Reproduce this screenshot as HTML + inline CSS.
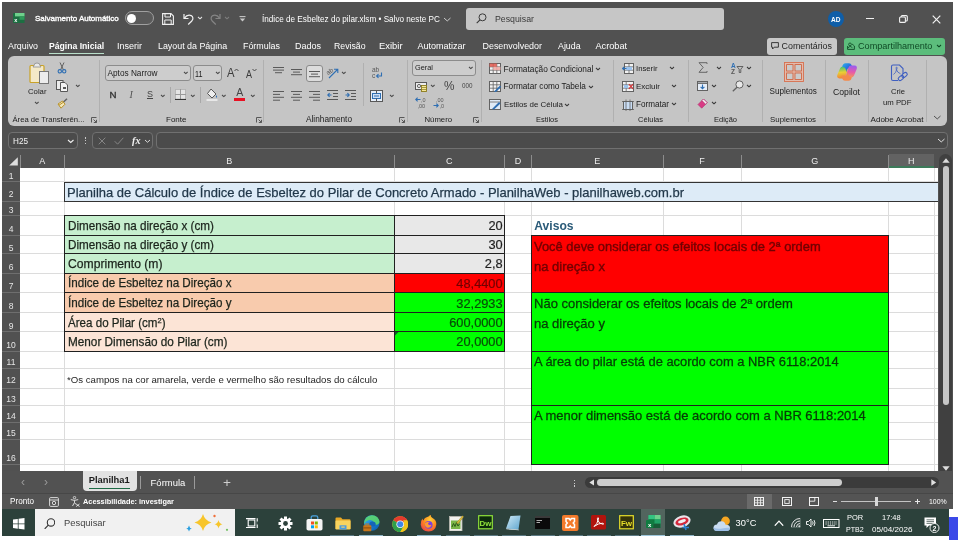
<!DOCTYPE html><html lang="pt-BR"><head><meta charset="utf-8"><title>Índice de Esbeltez do pilar.xlsm - Excel</title><style>

html,body{margin:0;padding:0;background:#fff;}
body{width:958px;height:540px;position:relative;overflow:hidden;font-family:"Liberation Sans", sans-serif;}
#r{will-change:transform;position:absolute;left:0;top:0;width:958px;height:540px;overflow:hidden;}
#r div,#r svg,#r span{position:absolute;}
#r span{white-space:nowrap;transform-origin:0 50%;display:block;}

</style></head><body><div id="r">
<div style="left:2px;top:2px;width:950.5px;height:507px;background:#515151;"></div>
<div style="left:466px;top:8px;width:258px;height:22px;background:#c6c6c6;border-radius:3px;"></div>
<div style="left:7.8px;top:56px;width:939px;height:69.5px;background:#c5c5c5;border-radius:6px;"></div>
<div style="left:7.5px;top:131.5px;width:70.5px;height:17.8px;background:#4b4b4b;border:1px solid #707070;border-radius:4px;box-sizing:border-box;"></div>
<div style="left:92.3px;top:131.5px;width:60.3px;height:17.8px;background:#4b4b4b;border:1px solid #707070;border-radius:4px;box-sizing:border-box;"></div>
<div style="left:155.8px;top:131.5px;width:792.5px;height:17.8px;background:#4b4b4b;border:1px solid #707070;border-radius:4px;box-sizing:border-box;"></div>
<div style="left:2px;top:154px;width:950.5px;height:317px;background:#515151;"></div>
<div style="left:20px;top:167.5px;width:918.3px;height:303.5px;background:#fff;"></div>
<div style="left:64.0px;top:167.5px;width:1px;height:303.5px;background:#dcdcdc;"></div>
<div style="left:393.5px;top:167.5px;width:1px;height:303.5px;background:#dcdcdc;"></div>
<div style="left:504.0px;top:167.5px;width:1px;height:303.5px;background:#dcdcdc;"></div>
<div style="left:531.0px;top:167.5px;width:1px;height:303.5px;background:#dcdcdc;"></div>
<div style="left:662.5px;top:167.5px;width:1px;height:303.5px;background:#dcdcdc;"></div>
<div style="left:740.5px;top:167.5px;width:1px;height:303.5px;background:#dcdcdc;"></div>
<div style="left:888.0px;top:167.5px;width:1px;height:303.5px;background:#dcdcdc;"></div>
<div style="left:933.5px;top:167.5px;width:1px;height:303.5px;background:#dcdcdc;"></div>
<div style="left:20px;top:181.0px;width:918.3px;height:1px;background:#dcdcdc;"></div>
<div style="left:20px;top:201.0px;width:918.3px;height:1px;background:#dcdcdc;"></div>
<div style="left:20px;top:215.0px;width:918.3px;height:1px;background:#dcdcdc;"></div>
<div style="left:20px;top:234.5px;width:918.3px;height:1px;background:#dcdcdc;"></div>
<div style="left:20px;top:253.2px;width:918.3px;height:1px;background:#dcdcdc;"></div>
<div style="left:20px;top:272.7px;width:918.3px;height:1px;background:#dcdcdc;"></div>
<div style="left:20px;top:291.9px;width:918.3px;height:1px;background:#dcdcdc;"></div>
<div style="left:20px;top:311.8px;width:918.3px;height:1px;background:#dcdcdc;"></div>
<div style="left:20px;top:331.1px;width:918.3px;height:1px;background:#dcdcdc;"></div>
<div style="left:20px;top:350.7px;width:918.3px;height:1px;background:#dcdcdc;"></div>
<div style="left:20px;top:368.0px;width:918.3px;height:1px;background:#dcdcdc;"></div>
<div style="left:20px;top:388.0px;width:918.3px;height:1px;background:#dcdcdc;"></div>
<div style="left:20px;top:404.5px;width:918.3px;height:1px;background:#dcdcdc;"></div>
<div style="left:20px;top:422.0px;width:918.3px;height:1px;background:#dcdcdc;"></div>
<div style="left:20px;top:438.5px;width:918.3px;height:1px;background:#dcdcdc;"></div>
<div style="left:20px;top:463.5px;width:918.3px;height:1px;background:#dcdcdc;"></div>
<div style="left:19.5px;top:154.5px;width:1px;height:13px;background:#8c8c8c;"></div>
<div style="left:64.0px;top:154.5px;width:1px;height:13px;background:#8c8c8c;"></div>
<div style="left:393.5px;top:154.5px;width:1px;height:13px;background:#8c8c8c;"></div>
<div style="left:504.0px;top:154.5px;width:1px;height:13px;background:#8c8c8c;"></div>
<div style="left:531.0px;top:154.5px;width:1px;height:13px;background:#8c8c8c;"></div>
<div style="left:662.5px;top:154.5px;width:1px;height:13px;background:#8c8c8c;"></div>
<div style="left:740.5px;top:154.5px;width:1px;height:13px;background:#8c8c8c;"></div>
<div style="left:888.0px;top:154.5px;width:1px;height:13px;background:#8c8c8c;"></div>
<div style="left:2px;top:181.0px;width:18px;height:1px;background:#6e6e6e;"></div>
<div style="left:2px;top:201.0px;width:18px;height:1px;background:#6e6e6e;"></div>
<div style="left:2px;top:215.0px;width:18px;height:1px;background:#6e6e6e;"></div>
<div style="left:2px;top:234.5px;width:18px;height:1px;background:#6e6e6e;"></div>
<div style="left:2px;top:253.2px;width:18px;height:1px;background:#6e6e6e;"></div>
<div style="left:2px;top:272.7px;width:18px;height:1px;background:#6e6e6e;"></div>
<div style="left:2px;top:291.9px;width:18px;height:1px;background:#6e6e6e;"></div>
<div style="left:2px;top:311.8px;width:18px;height:1px;background:#6e6e6e;"></div>
<div style="left:2px;top:331.1px;width:18px;height:1px;background:#6e6e6e;"></div>
<div style="left:2px;top:350.7px;width:18px;height:1px;background:#6e6e6e;"></div>
<div style="left:2px;top:368.0px;width:18px;height:1px;background:#6e6e6e;"></div>
<div style="left:2px;top:388.0px;width:18px;height:1px;background:#6e6e6e;"></div>
<div style="left:2px;top:404.5px;width:18px;height:1px;background:#6e6e6e;"></div>
<div style="left:2px;top:422.0px;width:18px;height:1px;background:#6e6e6e;"></div>
<div style="left:2px;top:438.5px;width:18px;height:1px;background:#6e6e6e;"></div>
<div style="left:2px;top:463.5px;width:18px;height:1px;background:#6e6e6e;"></div>
<div style="left:888.5px;top:154px;width:45.5px;height:13.5px;background:#626262;"></div>
<div style="left:888.5px;top:166px;width:45.5px;height:1.5px;background:#3d7a5a;"></div>
<svg style="left:9px;top:157.3px;" width="9" height="8.6" viewBox="0 0 9 8.6"><path d="M8.8 0.2 L8.8 8.4 L0.2 8.4 Z" fill="#dedede"/></svg>
<div style="left:64px;top:181.5px;width:874.3px;height:20.3px;background:#ddebf7;border-top:1px solid #333;border-bottom:1px solid #333;border-left:1px solid #333;box-sizing:border-box;"></div>
<div style="left:64px;top:215.5px;width:330px;height:19.5px;background:#c6efce;"></div>
<div style="left:394px;top:215.5px;width:110px;height:19.5px;background:#e8e8e8;"></div>
<div style="left:64px;top:235px;width:330px;height:18.69999999999999px;background:#c6efce;"></div>
<div style="left:394px;top:235px;width:110px;height:18.69999999999999px;background:#e8e8e8;"></div>
<div style="left:64px;top:253.7px;width:330px;height:19.5px;background:#c6efce;"></div>
<div style="left:394px;top:253.7px;width:110px;height:19.5px;background:#e8e8e8;"></div>
<div style="left:64px;top:273.2px;width:330px;height:19.19999999999999px;background:#f8cbad;"></div>
<div style="left:394px;top:273.2px;width:110px;height:19.19999999999999px;background:#ff0000;"></div>
<div style="left:64px;top:292.4px;width:330px;height:19.900000000000034px;background:#f8cbad;"></div>
<div style="left:394px;top:292.4px;width:110px;height:19.900000000000034px;background:#00ff00;"></div>
<div style="left:64px;top:312.3px;width:330px;height:19.30000000000001px;background:#fce4d6;"></div>
<div style="left:394px;top:312.3px;width:110px;height:19.30000000000001px;background:#00ff00;"></div>
<div style="left:64px;top:331.6px;width:330px;height:19.599999999999966px;background:#fce4d6;"></div>
<div style="left:394px;top:331.6px;width:110px;height:19.599999999999966px;background:#00ff00;"></div>
<div style="left:64px;top:215.0px;width:440px;height:1px;background:#202020;"></div>
<div style="left:64px;top:234.5px;width:440px;height:1px;background:#202020;"></div>
<div style="left:64px;top:253.2px;width:440px;height:1px;background:#202020;"></div>
<div style="left:64px;top:272.7px;width:440px;height:1px;background:#202020;"></div>
<div style="left:64px;top:291.9px;width:440px;height:1px;background:#202020;"></div>
<div style="left:64px;top:311.8px;width:440px;height:1px;background:#202020;"></div>
<div style="left:64px;top:331.1px;width:440px;height:1px;background:#202020;"></div>
<div style="left:64px;top:350.7px;width:440px;height:1px;background:#202020;"></div>
<div style="left:63.5px;top:215.0px;width:1px;height:136.7px;background:#202020;"></div>
<div style="left:393.5px;top:215.0px;width:1px;height:136.7px;background:#202020;"></div>
<div style="left:503.5px;top:215.0px;width:1px;height:136.7px;background:#202020;"></div>
<div style="left:531px;top:235px;width:357px;height:57px;background:#ff0000;"></div>
<div style="left:531px;top:292px;width:357px;height:172px;background:#00ff00;"></div>
<div style="left:531px;top:234.5px;width:357px;height:1px;background:#202020;"></div>
<div style="left:531px;top:291.5px;width:357px;height:1px;background:#202020;"></div>
<div style="left:531px;top:350.5px;width:357px;height:1px;background:#202020;"></div>
<div style="left:531px;top:404.5px;width:357px;height:1px;background:#202020;"></div>
<div style="left:531px;top:463.5px;width:357px;height:1px;background:#202020;"></div>
<div style="left:530.5px;top:234.5px;width:1px;height:230px;background:#202020;"></div>
<div style="left:887.5px;top:234.5px;width:1px;height:230px;background:#202020;"></div>
<div style="left:939.3px;top:153.5px;width:13px;height:318px;background:#404040;border-radius:6.5px 6.5px 0 0;"></div>
<div style="left:942.8px;top:166px;width:6.3px;height:239px;background:#c6c6c6;border-radius:3px;"></div>
<svg style="left:942px;top:157.5px;" width="8" height="5" viewBox="0 0 8 5"><path d="M4 0.3 L7.7 4.8 L0.3 4.8 Z" fill="#dcdcdc"/></svg>
<svg style="left:942px;top:465.5px;" width="8" height="5" viewBox="0 0 8 5"><path d="M4 4.7 L7.7 0.2 L0.3 0.2 Z" fill="#dcdcdc"/></svg>
<div style="left:2px;top:471.3px;width:950.5px;height:22.5px;background:#525252;"></div>
<div style="left:83px;top:471px;width:54px;height:20px;background:#e2e2e2;border-radius:0 0 4px 4px;"></div>
<div style="left:88.5px;top:487.5px;width:41.5px;height:1.3px;background:#1e6b45;"></div>
<div style="left:193.5px;top:476px;width:1px;height:13px;background:#9a9a9a;"></div>
<div style="left:585px;top:477.3px;width:354px;height:11px;background:#3b3b3b;border-radius:5.5px;"></div>
<div style="left:597px;top:479.2px;width:245px;height:6.8px;background:#cdcdcd;border-radius:3.4px;"></div>
<svg style="left:588.5px;top:479px;" width="5.5" height="7" viewBox="0 0 5.5 7"><path d="M0.3 3.5 L5.2 0.3 L5.2 6.7 Z" fill="#e0e0e0"/></svg>
<svg style="left:931px;top:479px;" width="5.5" height="7" viewBox="0 0 5.5 7"><path d="M5.2 3.5 L0.3 0.3 L0.3 6.7 Z" fill="#e0e0e0"/></svg>
<div style="left:2px;top:493.3px;width:950.5px;height:15.7px;background:#545454;"></div>
<div style="left:2px;top:493.3px;width:950.5px;height:1px;background:#474747;"></div>
<div style="left:2px;top:508.8px;width:947.3px;height:27.5px;background:#2c413b;"></div>
<div style="left:34.9px;top:508.8px;width:200.5px;height:27.5px;background:#f1f1f1;"></div>
<div style="left:949px;top:517px;width:9px;height:23px;background:#3b49e8;"></div>
<span style="left:35.2px;top:12.8px;font-size:8.05px;line-height:12px;color:#ffffff;-webkit-text-stroke:0.35px;transform:scaleX(0.991);">Salvamento Automático</span>
<span style="left:262px;top:13.6px;font-size:8.17px;line-height:12px;color:#ffffff;">Índice de Esbeltez do pilar.xlsm • Salvo neste PC</span>
<span style="left:495px;top:12.5px;font-size:8.77px;line-height:13px;color:#3a3a3a;">Pesquisar</span>
<span style="left:8px;top:39.8px;font-size:8.87px;line-height:13px;color:#ffffff;">Arquivo</span>
<span style="left:49px;top:39.8px;font-size:8.63px;line-height:13px;color:#ffffff;font-weight:700;">Página Inicial</span>
<span style="left:117px;top:39.8px;font-size:9.02px;line-height:13px;color:#ffffff;">Inserir</span>
<span style="left:158px;top:39.8px;font-size:8.89px;line-height:13px;color:#ffffff;">Layout da Página</span>
<span style="left:243px;top:39.8px;font-size:8.9px;line-height:13px;color:#ffffff;">Fórmulas</span>
<span style="left:295px;top:39.8px;font-size:9.02px;line-height:13px;color:#ffffff;">Dados</span>
<span style="left:334px;top:39.8px;font-size:8.74px;line-height:13px;color:#ffffff;">Revisão</span>
<span style="left:379px;top:39.8px;font-size:9.17px;line-height:13px;color:#ffffff;transform:scaleX(1.028);">Exibir</span>
<span style="left:417.5px;top:39.8px;font-size:9.02px;line-height:13px;color:#ffffff;">Automatizar</span>
<span style="left:482.5px;top:39.8px;font-size:8.94px;line-height:13px;color:#ffffff;">Desenvolvedor</span>
<span style="left:558px;top:39.8px;font-size:8.82px;line-height:13px;color:#ffffff;">Ajuda</span>
<span style="left:595.5px;top:39.8px;font-size:9.16px;line-height:13px;color:#ffffff;">Acrobat</span>
<div style="left:48.6px;top:53px;width:55.4px;height:1px;background:#b9dfca;"></div>
<span style="left:42.25px;top:154.7px;font-size:9px;line-height:13px;color:#ececec;transform:translateX(-50%);">A</span>
<span style="left:229.25px;top:154.7px;font-size:9px;line-height:13px;color:#ececec;transform:translateX(-50%);">B</span>
<span style="left:449.25px;top:154.7px;font-size:9px;line-height:13px;color:#ececec;transform:translateX(-50%);">C</span>
<span style="left:518.0px;top:154.7px;font-size:9px;line-height:13px;color:#ececec;transform:translateX(-50%);">D</span>
<span style="left:597.25px;top:154.7px;font-size:9px;line-height:13px;color:#ececec;transform:translateX(-50%);">E</span>
<span style="left:702.0px;top:154.7px;font-size:9px;line-height:13px;color:#ececec;transform:translateX(-50%);">F</span>
<span style="left:814.75px;top:154.7px;font-size:9px;line-height:13px;color:#ececec;transform:translateX(-50%);">G</span>
<span style="left:911.25px;top:154.7px;font-size:9px;line-height:13px;color:#ececec;transform:translateX(-50%);">H</span>
<span style="left:11px;top:170.0px;font-size:8.5px;line-height:12px;color:#e6e6e6;transform:translateX(-50%);">1</span>
<span style="left:11px;top:188.0px;font-size:8.5px;line-height:12px;color:#e6e6e6;transform:translateX(-50%);">2</span>
<span style="left:11px;top:204.0px;font-size:8.5px;line-height:12px;color:#e6e6e6;transform:translateX(-50%);">3</span>
<span style="left:11px;top:223.0px;font-size:8.5px;line-height:12px;color:#e6e6e6;transform:translateX(-50%);">4</span>
<span style="left:11px;top:241.7px;font-size:8.5px;line-height:12px;color:#e6e6e6;transform:translateX(-50%);">5</span>
<span style="left:11px;top:261.2px;font-size:8.5px;line-height:12px;color:#e6e6e6;transform:translateX(-50%);">6</span>
<span style="left:11px;top:280.4px;font-size:8.5px;line-height:12px;color:#e6e6e6;transform:translateX(-50%);">7</span>
<span style="left:11px;top:300.3px;font-size:8.5px;line-height:12px;color:#e6e6e6;transform:translateX(-50%);">8</span>
<span style="left:11px;top:319.6px;font-size:8.5px;line-height:12px;color:#e6e6e6;transform:translateX(-50%);">9</span>
<span style="left:11px;top:339.2px;font-size:8.5px;line-height:12px;color:#e6e6e6;transform:translateX(-50%);">10</span>
<span style="left:11px;top:356.2px;font-size:8.5px;line-height:12px;color:#e6e6e6;transform:translateX(-50%);">11</span>
<span style="left:11px;top:374.2px;font-size:8.5px;line-height:12px;color:#e6e6e6;transform:translateX(-50%);">12</span>
<span style="left:11px;top:393.1px;font-size:8.5px;line-height:12px;color:#e6e6e6;transform:translateX(-50%);">13</span>
<span style="left:11px;top:410.1px;font-size:8.5px;line-height:12px;color:#e6e6e6;transform:translateX(-50%);">14</span>
<span style="left:11px;top:427.1px;font-size:8.5px;line-height:12px;color:#e6e6e6;transform:translateX(-50%);">15</span>
<span style="left:11px;top:452.0px;font-size:8.5px;line-height:12px;color:#e6e6e6;transform:translateX(-50%);">16</span>
<span style="left:67px;top:184.0px;font-size:13.5px;line-height:18px;color:#22384a;transform:scaleX(0.962);-webkit-text-stroke:0.25px;">Planilha de Cálculo de Índice de Esbeltez do Pilar de Concreto Armado - PlanilhaWeb - planilhaweb.com.br</span>
<span style="left:67.5px;top:217.9px;font-size:12.4px;line-height:17px;color:#1c241c;transform:scaleX(0.942);-webkit-text-stroke:0.25px;">Dimensão na direção x (cm)</span>
<span style="left:67.5px;top:236.6px;font-size:12.4px;line-height:17px;color:#1c241c;transform:scaleX(0.942);-webkit-text-stroke:0.25px;">Dimensão na direção y (cm)</span>
<span style="left:67.5px;top:256.1px;font-size:12.4px;line-height:17px;color:#1c241c;transform:scaleX(0.980);-webkit-text-stroke:0.25px;">Comprimento (m)</span>
<span style="left:67.5px;top:275.3px;font-size:12.4px;line-height:17px;color:#1c241c;transform:scaleX(0.938);-webkit-text-stroke:0.25px;">Índice de Esbeltez na Direção x</span>
<span style="left:67.5px;top:295.2px;font-size:12.4px;line-height:17px;color:#1c241c;transform:scaleX(0.938);-webkit-text-stroke:0.25px;">Índice de Esbeltez na Direção y</span>
<span style="left:67.5px;top:314.5px;font-size:12.4px;line-height:17px;color:#1c241c;transform:scaleX(0.935);-webkit-text-stroke:0.25px;">Área do Pilar (cm<sup style="font-size:8px;line-height:0;vertical-align:4px">2</sup>)</span>
<span style="left:67.5px;top:334.1px;font-size:12.4px;line-height:17px;color:#1c241c;transform:scaleX(0.949);-webkit-text-stroke:0.25px;">Menor Dimensão do Pilar (cm)</span>
<span style="left:Nonepx;top:217.2px;font-size:12.8px;line-height:17px;color:#1f1f1f;left:auto;right:455.4px;-webkit-text-stroke:0.2px;">20</span>
<span style="left:Nonepx;top:235.9px;font-size:12.8px;line-height:17px;color:#1f1f1f;left:auto;right:455.4px;-webkit-text-stroke:0.2px;">30</span>
<span style="left:Nonepx;top:255.4px;font-size:12.8px;line-height:17px;color:#1f1f1f;left:auto;right:455.4px;-webkit-text-stroke:0.2px;">2,8</span>
<span style="left:Nonepx;top:274.6px;font-size:12.8px;line-height:17px;color:#720000;left:auto;right:455.4px;-webkit-text-stroke:0.2px;">48,4400</span>
<span style="left:Nonepx;top:294.5px;font-size:12.8px;line-height:17px;color:#074d07;left:auto;right:455.4px;-webkit-text-stroke:0.2px;">32,2933</span>
<span style="left:Nonepx;top:313.8px;font-size:12.8px;line-height:17px;color:#074d07;left:auto;right:455.4px;-webkit-text-stroke:0.2px;">600,0000</span>
<span style="left:Nonepx;top:333.4px;font-size:12.8px;line-height:17px;color:#074d07;left:auto;right:455.4px;-webkit-text-stroke:0.2px;">20,0000</span>
<span style="left:67px;top:373.0px;font-size:9.65px;line-height:13px;color:#1f1f1f;">*Os campos na cor amarela, verde e vermelho são resultados do cálculo</span>
<span style="left:534.3px;top:217.8px;font-size:12.12px;line-height:17px;color:#2a5a78;font-weight:700;">Avisos</span>
<span style="left:534px;top:237.5px;font-size:12.92px;line-height:18px;color:#720000;-webkit-text-stroke:0.4px;">Você deve onsiderar os efeitos locais de 2ª ordem</span>
<span style="left:534px;top:257.5px;font-size:13.03px;line-height:18px;color:#720000;-webkit-text-stroke:0.4px;">na direção x</span>
<span style="left:534px;top:294.5px;font-size:13.03px;line-height:18px;color:#063d06;-webkit-text-stroke:0.3px;">Não considerar os efeitos locais de 2ª ordem</span>
<span style="left:534px;top:314.5px;font-size:13.03px;line-height:18px;color:#063d06;-webkit-text-stroke:0.3px;">na direção y</span>
<span style="left:534px;top:353.0px;font-size:12.89px;line-height:18px;color:#063d06;-webkit-text-stroke:0.3px;">A área do pilar está de acordo com a NBR 6118:2014</span>
<span style="left:534px;top:407.0px;font-size:12.99px;line-height:18px;color:#063d06;-webkit-text-stroke:0.3px;">A menor dimensão está de acordo com a NBR 6118:2014</span>
<span style="left:88.7px;top:474.3px;font-size:9.34px;line-height:13px;color:#1a1a1a;font-weight:700;">Planilha1</span>
<span style="left:150.6px;top:475.7px;font-size:9.46px;line-height:13px;color:#ffffff;">Fórmula</span>
<span style="left:223px;top:472.5px;font-size:13.68px;line-height:19px;color:#cfcfcf;">+</span>
<span style="left:21px;top:472.0px;font-size:13.58px;line-height:19px;color:#9a9a9a;transform:scaleX(0.883);">‹</span>
<span style="left:44px;top:472.0px;font-size:13.58px;line-height:19px;color:#9a9a9a;transform:scaleX(0.883);">›</span>
<span style="left:9.9px;top:496.2px;font-size:8.24px;line-height:12px;color:#ffffff;transform:scaleX(0.988);">Pronto</span>
<span style="left:83px;top:495.8px;font-size:7.76px;line-height:12px;color:#ffffff;font-weight:700;transform:scaleX(0.950);">Acessibilidade: investigar</span>
<span style="left:929px;top:496.0px;font-size:7.27px;line-height:11px;color:#ffffff;transform:scaleX(0.956);">100%</span>
<span style="left:64px;top:517.1px;font-size:9.38px;line-height:13px;color:#444;">Pesquisar</span>
<span style="left:735.6px;top:516.8px;font-size:9.31px;line-height:13px;color:#ffffff;">30°C</span>
<span style="left:846.6px;top:511.9px;font-size:7.57px;line-height:11px;color:#ffffff;transform:scaleX(0.988);">POR</span>
<span style="left:846px;top:523.5px;font-size:7.57px;line-height:11px;color:#ffffff;transform:scaleX(0.936);">PTB2</span>
<span style="left:882.4px;top:511.7px;font-size:7.57px;line-height:11px;color:#ffffff;transform:scaleX(0.983);">17:48</span>
<span style="left:871.5px;top:523.5px;font-size:8.03px;line-height:11px;color:#ffffff;transform:scaleX(1.007);">05/04/2026</span>
<div style="left:99.0px;top:60px;width:1px;height:62px;background:#b0b0b0;"></div>
<div style="left:263.0px;top:60px;width:1px;height:62px;background:#b0b0b0;"></div>
<div style="left:406.5px;top:60px;width:1px;height:62px;background:#b0b0b0;"></div>
<div style="left:480.5px;top:60px;width:1px;height:62px;background:#b0b0b0;"></div>
<div style="left:612.5px;top:60px;width:1px;height:62px;background:#b0b0b0;"></div>
<div style="left:688.0px;top:60px;width:1px;height:62px;background:#b0b0b0;"></div>
<div style="left:761.5px;top:60px;width:1px;height:62px;background:#b0b0b0;"></div>
<div style="left:824.5px;top:60px;width:1px;height:62px;background:#b0b0b0;"></div>
<div style="left:868.0px;top:60px;width:1px;height:62px;background:#b0b0b0;"></div>
<div style="left:926.0px;top:60px;width:1px;height:62px;background:#b0b0b0;"></div>
<span style="left:12.5px;top:113.5px;font-size:7.67px;line-height:11px;color:#1c1c1c;">Área de Transferên...</span>
<span style="left:166px;top:113.5px;font-size:8.02px;line-height:11px;color:#1c1c1c;">Fonte</span>
<span style="left:306px;top:113.5px;font-size:8.14px;line-height:11px;color:#1c1c1c;transform:scaleX(1.018);">Alinhamento</span>
<span style="left:424.5px;top:113.5px;font-size:7.74px;line-height:11px;color:#1c1c1c;">Número</span>
<span style="left:536px;top:113.5px;font-size:7.66px;line-height:11px;color:#1c1c1c;transform:scaleX(0.976);">Estilos</span>
<span style="left:638px;top:113.5px;font-size:7.66px;line-height:11px;color:#1c1c1c;transform:scaleX(0.979);">Células</span>
<span style="left:714px;top:113.5px;font-size:7.66px;line-height:11px;color:#1c1c1c;transform:scaleX(0.982);">Edição</span>
<span style="left:770px;top:113.5px;font-size:7.89px;line-height:11px;color:#1c1c1c;">Suplementos</span>
<span style="left:870.5px;top:113.5px;font-size:8.09px;line-height:11px;color:#1c1c1c;">Adobe Acrobat</span>
<svg style="left:91px;top:116.5px;" width="6" height="6" viewBox="0 0 6 6"><path d="M0.5 5.5 V0.5 H5.5" fill="none" stroke="#585858" stroke-width="1"/><path d="M2.5 2.5 L5.5 5.5 M5.5 2.8 V5.5 H2.8" fill="none" stroke="#585858" stroke-width="1"/></svg>
<svg style="left:255.5px;top:116.5px;" width="6" height="6" viewBox="0 0 6 6"><path d="M0.5 5.5 V0.5 H5.5" fill="none" stroke="#585858" stroke-width="1"/><path d="M2.5 2.5 L5.5 5.5 M5.5 2.8 V5.5 H2.8" fill="none" stroke="#585858" stroke-width="1"/></svg>
<svg style="left:398.5px;top:116.5px;" width="6" height="6" viewBox="0 0 6 6"><path d="M0.5 5.5 V0.5 H5.5" fill="none" stroke="#585858" stroke-width="1"/><path d="M2.5 2.5 L5.5 5.5 M5.5 2.8 V5.5 H2.8" fill="none" stroke="#585858" stroke-width="1"/></svg>
<svg style="left:472.5px;top:116.5px;" width="6" height="6" viewBox="0 0 6 6"><path d="M0.5 5.5 V0.5 H5.5" fill="none" stroke="#585858" stroke-width="1"/><path d="M2.5 2.5 L5.5 5.5 M5.5 2.8 V5.5 H2.8" fill="none" stroke="#585858" stroke-width="1"/></svg>
<svg style="left:933.25px;top:114.5px;" width="8.5" height="5" viewBox="0 0 8.5 5"><path d="M1 1 L4.25 3.93 L7.5 1" fill="none" stroke="#444" stroke-width="0.9"/></svg>
<svg style="left:29px;top:62px;" width="21" height="23" viewBox="0 0 21 23"><rect x="1" y="3.5" width="14" height="17" rx="1" fill="#f4e9c8" stroke="#c9a227" stroke-width="1.2"/>
<path d="M5 3.5 Q5 1 8 1 Q11 1 11 3.5 L12 5 H4 Z" fill="#e9e9e9" stroke="#8a8a8a" stroke-width="0.8"/>
<rect x="10.5" y="9.5" width="9" height="12" fill="#ececec" stroke="#777" stroke-width="1"/></svg>
<span style="left:28px;top:86.0px;font-size:8.05px;line-height:12px;color:#1c1c1c;transform:scaleX(0.962);">Colar</span>
<svg style="left:34.2px;top:100.5px;" width="5.6" height="5" viewBox="0 0 5.6 5"><path d="M1 1 L2.8 2.62 L4.6 1" fill="none" stroke="#4a4a4a" stroke-width="1.05"/></svg>
<svg style="left:57px;top:62px;" width="10" height="12" viewBox="0 0 10 12"><path d="M3 0.5 L6.5 8 M7 0.5 L3.5 8" stroke="#626262" stroke-width="1" fill="none"/>
<circle cx="2.8" cy="9.3" r="1.7" fill="none" stroke="#2f6fb3" stroke-width="1.1"/><circle cx="7.2" cy="9.3" r="1.7" fill="none" stroke="#2f6fb3" stroke-width="1.1"/></svg>
<svg style="left:56px;top:79.5px;" width="13" height="12" viewBox="0 0 13 12"><rect x="0.5" y="0.5" width="6.5" height="9" fill="#ececec" stroke="#585858" stroke-width="1"/>
<path d="M4.5 2.5 H9 L11.5 5 V11.5 H4.5 Z" fill="#f4f4f4" stroke="#585858" stroke-width="1"/><rect x="7" y="7" width="3" height="2" fill="#585858"/></svg>
<svg style="left:75.2px;top:83.5px;" width="5.6" height="5" viewBox="0 0 5.6 5"><path d="M1 1 L2.8 2.62 L4.6 1" fill="none" stroke="#4a4a4a" stroke-width="1.05"/></svg>
<svg style="left:56.5px;top:98px;" width="11" height="11" viewBox="0 0 11 11"><path d="M6 4.5 L10 0.8" stroke="#626262" stroke-width="1.5"/><path d="M1 6 L5.5 3 L8 6.2 L4 10.2 Z" fill="#f3e6b8" stroke="#b8922a" stroke-width="1"/><path d="M2 7.2 L6.5 4.2" stroke="#b8922a" stroke-width="1"/></svg>
<div style="left:105px;top:65px;width:85.5px;height:16px;background:#cdcdcd;border:1px solid #8c8c8c;border-radius:3px;box-sizing:border-box;"></div>
<div style="left:192.5px;top:65px;width:29px;height:16px;background:#cdcdcd;border:1px solid #8c8c8c;border-radius:3px;box-sizing:border-box;"></div>
<span style="left:107.5px;top:67.6px;font-size:8.26px;line-height:12px;color:#1c1c1c;">Aptos Narrow</span>
<span style="left:195px;top:67.6px;font-size:8.6px;line-height:12px;color:#1c1c1c;transform:scaleX(0.841);">11</span>
<svg style="left:183.2px;top:71.0px;" width="5.6" height="5" viewBox="0 0 5.6 5"><path d="M1 1 L2.8 2.62 L4.6 1" fill="none" stroke="#4a4a4a" stroke-width="1.05"/></svg>
<svg style="left:214.7px;top:71.0px;" width="5.6" height="5" viewBox="0 0 5.6 5"><path d="M1 1 L2.8 2.62 L4.6 1" fill="none" stroke="#4a4a4a" stroke-width="1.05"/></svg>
<span style="left:227px;top:64.0px;font-size:12.61px;line-height:18px;color:#3c3c3c;transform:scaleX(0.892);">A</span>
<svg style="left:234px;top:67.5px;" width="5" height="4" viewBox="0 0 5 4"><path d="M0.5 3 L2.5 1 L4.5 3" fill="none" stroke="#3c3c3c" stroke-width="0.9"/></svg>
<span style="left:246px;top:66.5px;font-size:10.67px;line-height:15px;color:#3c3c3c;transform:scaleX(0.842);">A</span>
<svg style="left:251.5px;top:68px;" width="5" height="4" viewBox="0 0 5 4"><path d="M0.5 1 L2.5 3 L4.5 1" fill="none" stroke="#3c3c3c" stroke-width="0.9"/></svg>
<span style="left:109.5px;top:88.0px;font-size:9.7px;line-height:14px;color:#333;-webkit-text-stroke:0.35px;">N</span>
<span style="left:129.5px;top:88.0px;font-size:10px;line-height:14px;color:#555;font-style:italic;font-family:'Liberation Serif',serif;">I</span>
<span style="left:147px;top:88.0px;font-size:9px;line-height:13px;color:#444;text-decoration:underline;">S</span>
<svg style="left:159.7px;top:93.5px;" width="5.6" height="5" viewBox="0 0 5.6 5"><path d="M1 1 L2.8 2.62 L4.6 1" fill="none" stroke="#4a4a4a" stroke-width="1.05"/></svg>
<div style="left:170.0px;top:87px;width:1px;height:16px;background:#a8a8a8;"></div>
<svg style="left:174.5px;top:89px;" width="11" height="11" viewBox="0 0 11 11"><rect x="0.5" y="0.5" width="10" height="10" fill="#e4e4e4" stroke="#9a9a9a" stroke-width="1" stroke-dasharray="1 1"/><path d="M5.5 0 V11 M0 5.5 H11" stroke="#9a9a9a" stroke-width="1"/><path d="M0 10.5 H11" stroke="#333" stroke-width="1.2"/></svg>
<svg style="left:190.2px;top:93.5px;" width="5.6" height="5" viewBox="0 0 5.6 5"><path d="M1 1 L2.8 2.62 L4.6 1" fill="none" stroke="#4a4a4a" stroke-width="1.05"/></svg>
<div style="left:200.0px;top:87px;width:1px;height:16px;background:#a8a8a8;"></div>
<svg style="left:205.5px;top:88px;" width="12" height="13" viewBox="0 0 12 13"><path d="M5 1 L10 6 L6 10 L1.5 5.5 Z" fill="#efefef" stroke="#585858" stroke-width="1"/><path d="M10.5 7 Q11.8 9 10.5 10 Q9.3 9 10.5 7" fill="#2f6fb3"/><rect x="0.5" y="11" width="11" height="2" fill="#e8e8e8"/></svg>
<svg style="left:221.2px;top:93.5px;" width="5.6" height="5" viewBox="0 0 5.6 5"><path d="M1 1 L2.8 2.62 L4.6 1" fill="none" stroke="#4a4a4a" stroke-width="1.05"/></svg>
<span style="left:239.7px;top:85.3px;font-size:10.5px;line-height:15px;color:#444;transform:translateX(-50%);">A</span>
<div style="left:234px;top:98px;width:11px;height:2.8px;background:#e81123;"></div>
<svg style="left:249.7px;top:93.5px;" width="5.6" height="5" viewBox="0 0 5.6 5"><path d="M1 1 L2.8 2.62 L4.6 1" fill="none" stroke="#4a4a4a" stroke-width="1.05"/></svg>
<svg style="left:272.5px;top:67px;" width="12" height="12" viewBox="0 0 12 12"><rect x="0" y="0.00" width="11" height="1" fill="#5a5a5a"/><rect x="0" y="2.60" width="11" height="1" fill="#5a5a5a"/><rect x="2" y="5.20" width="7" height="1" fill="#5a5a5a"/></svg>
<svg style="left:290.5px;top:69px;" width="12" height="12" viewBox="0 0 12 12"><rect x="0" y="0.00" width="11" height="1" fill="#5a5a5a"/><rect x="2" y="2.60" width="7" height="1" fill="#5a5a5a"/><rect x="0" y="5.20" width="11" height="1" fill="#5a5a5a"/></svg>
<div style="left:305.5px;top:64.5px;width:17px;height:17px;background:#dcdcdc;border:1px solid #8a8a8a;border-radius:3px;box-sizing:border-box;"></div>
<svg style="left:308.5px;top:71px;" width="12" height="12" viewBox="0 0 12 12"><rect x="0" y="0.00" width="11" height="1" fill="#5a5a5a"/><rect x="2" y="2.60" width="7" height="1" fill="#5a5a5a"/><rect x="0" y="5.20" width="11" height="1" fill="#5a5a5a"/></svg>
<svg style="left:326px;top:66px;" width="13" height="13" viewBox="0 0 13 13"><text x="0.5" y="7.5" font-size="6.5" fill="#585858" transform="rotate(-35 4 6)" font-family="Liberation Sans">ab</text><path d="M3 12 L11.5 3.5 M8 3.2 H11.8 V7" fill="none" stroke="#2f6fb3" stroke-width="1.1"/></svg>
<svg style="left:340.7px;top:71.0px;" width="5.6" height="5" viewBox="0 0 5.6 5"><path d="M1 1 L2.8 2.62 L4.6 1" fill="none" stroke="#4a4a4a" stroke-width="1.05"/></svg>
<div style="left:362.5px;top:63px;width:1px;height:43px;background:#b0b0b0;"></div>
<svg style="left:371px;top:67px;" width="12" height="12" viewBox="0 0 12 12"><text x="1" y="5.2" font-size="6.5" fill="#585858" font-family="Liberation Sans">ab</text><text x="1" y="11" font-size="6.5" fill="#585858" font-family="Liberation Sans">c</text><path d="M10.5 5.5 V9 H5.8 M7.5 7.2 L5.6 9 L7.5 10.8" fill="none" stroke="#2f6fb3" stroke-width="1.1"/></svg>
<svg style="left:272.5px;top:90.5px;" width="12" height="12" viewBox="0 0 12 12"><rect x="0" y="0.00" width="11" height="1" fill="#5a5a5a"/><rect x="0" y="2.90" width="7" height="1" fill="#5a5a5a"/><rect x="0" y="5.80" width="11" height="1" fill="#5a5a5a"/><rect x="0" y="8.70" width="7" height="1" fill="#5a5a5a"/></svg>
<svg style="left:290.5px;top:90.5px;" width="12" height="12" viewBox="0 0 12 12"><rect x="0" y="0.00" width="11" height="1" fill="#5a5a5a"/><rect x="2" y="2.90" width="7" height="1" fill="#5a5a5a"/><rect x="0" y="5.80" width="11" height="1" fill="#5a5a5a"/><rect x="2" y="8.70" width="7" height="1" fill="#5a5a5a"/></svg>
<svg style="left:308.5px;top:90.5px;" width="12" height="12" viewBox="0 0 12 12"><rect x="0" y="0.00" width="11" height="1" fill="#5a5a5a"/><rect x="4" y="2.90" width="7" height="1" fill="#5a5a5a"/><rect x="0" y="5.80" width="11" height="1" fill="#5a5a5a"/><rect x="4" y="8.70" width="7" height="1" fill="#5a5a5a"/></svg>
<svg style="left:326.5px;top:90px;" width="12" height="11" viewBox="0 0 12 11"><path d="M0 0.5 H11 M6 3.5 H11 M6 6.5 H11 M0 9.5 H11" stroke="#585858" stroke-width="1"/><path d="M4.5 5 H0.8 M2.6 3.2 L0.8 5 L2.6 6.8" fill="none" stroke="#2f6fb3" stroke-width="1.1"/></svg>
<svg style="left:344.5px;top:90px;" width="12" height="11" viewBox="0 0 12 11"><path d="M0 0.5 H11 M6 3.5 H11 M6 6.5 H11 M0 9.5 H11" stroke="#585858" stroke-width="1"/><path d="M0.5 5 H4.2 M2.4 3.2 L4.2 5 L2.4 6.8" fill="none" stroke="#2f6fb3" stroke-width="1.1"/></svg>
<svg style="left:369.5px;top:89.5px;" width="13" height="12" viewBox="0 0 13 12"><rect x="0.5" y="0.5" width="12" height="11" fill="#e6eef8" stroke="#585858" stroke-width="1"/><rect x="2.5" y="3.5" width="8" height="5" fill="#cfe0f5" stroke="#2f6fb3" stroke-width="1"/><path d="M6.5 0 V3.5 M6.5 8.5 V12" stroke="#585858" stroke-width="1"/><path d="M4 6 H9" stroke="#2f6fb3" stroke-width="1"/></svg>
<svg style="left:389.2px;top:93.5px;" width="5.6" height="5" viewBox="0 0 5.6 5"><path d="M1 1 L2.8 2.62 L4.6 1" fill="none" stroke="#4a4a4a" stroke-width="1.05"/></svg>
<div style="left:412px;top:59.5px;width:63.5px;height:16px;background:#cdcdcd;border:1px solid #8c8c8c;border-radius:3px;box-sizing:border-box;"></div>
<span style="left:415px;top:61.5px;font-size:8.05px;line-height:12px;color:#1c1c1c;transform:scaleX(0.914);">Geral</span>
<svg style="left:467.7px;top:65.5px;" width="5.6" height="5" viewBox="0 0 5.6 5"><path d="M1 1 L2.8 2.62 L4.6 1" fill="none" stroke="#4a4a4a" stroke-width="1.05"/></svg>
<svg style="left:415px;top:80.5px;" width="12" height="11" viewBox="0 0 12 11"><rect x="0.5" y="1.5" width="11" height="7" fill="#ececec" stroke="#585858" stroke-width="1"/><circle cx="4" cy="5" r="1.6" fill="none" stroke="#585858" stroke-width="0.9"/><rect x="6.5" y="4.5" width="5" height="6" fill="#f5e79a" stroke="#8a7a1a" stroke-width="0.9"/><path d="M7 6.5 H11 M7 8.5 H11" stroke="#8a7a1a" stroke-width="0.7"/></svg>
<svg style="left:430.2px;top:83.5px;" width="5.6" height="5" viewBox="0 0 5.6 5"><path d="M1 1 L2.8 2.62 L4.6 1" fill="none" stroke="#4a4a4a" stroke-width="1.05"/></svg>
<span style="left:444px;top:77.0px;font-size:13.09px;line-height:18px;color:#444;transform:scaleX(0.901);">%</span>
<span style="left:462px;top:81.0px;font-size:6.79px;line-height:10px;color:#444;transform:scaleX(0.926);">000</span>
<svg style="left:415px;top:97px;" width="12" height="12" viewBox="0 0 12 12"><path d="M5.5 2.5 H0.8 M2.6 0.7 L0.8 2.5 L2.6 4.3" fill="none" stroke="#2f6fb3" stroke-width="1.1"/><text x="6" y="5" font-size="5.5" fill="#585858" font-family="Liberation Sans">,0</text><text x="2.5" y="11" font-size="5.5" fill="#585858" font-family="Liberation Sans">,00</text></svg>
<svg style="left:433px;top:97px;" width="12" height="12" viewBox="0 0 12 12"><text x="3" y="5" font-size="5.5" fill="#585858" font-family="Liberation Sans">,00</text><path d="M0.5 8.5 H5.2 M3.4 6.7 L5.2 8.5 L3.4 10.3" fill="none" stroke="#2f6fb3" stroke-width="1.1"/><text x="6.5" y="11" font-size="5.5" fill="#585858" font-family="Liberation Sans">,0</text></svg>
<svg style="left:489px;top:63px;" width="12" height="11" viewBox="0 0 12 11"><rect x="0.5" y="0.5" width="11" height="10" fill="#f2f2f2" stroke="#626262" stroke-width="1"/><path d="M0.5 3.8 H11.5 M0.5 7.2 H11.5 M4.2 0.5 V10.5 M7.8 0.5 V10.5" stroke="#626262" stroke-width="0.8"/><rect x="0.5" y="0.5" width="7.3" height="3.3" fill="#e2574c" opacity="0.85"/><rect x="4.2" y="3.8" width="7.3" height="3.4" fill="#f2a9a3" opacity="0.85"/></svg>
<svg style="left:489px;top:81px;" width="12" height="11" viewBox="0 0 12 11"><rect x="0.5" y="0.5" width="11" height="10" fill="#f2f2f2" stroke="#626262" stroke-width="1"/><path d="M0.5 3.8 H11.5 M0.5 7.2 H11.5 M4.2 0.5 V10.5 M7.8 0.5 V10.5" stroke="#626262" stroke-width="0.8"/><path d="M5 10.5 L11 4.5 L12 6 L7 11 Z" fill="#2f6fb3"/></svg>
<svg style="left:489px;top:98.5px;" width="12" height="11" viewBox="0 0 12 11"><rect x="0.5" y="0.5" width="11" height="10" fill="#dfeaf6" stroke="#626262" stroke-width="1"/><path d="M0.5 3 H11.5" stroke="#626262" stroke-width="0.8"/><path d="M3 10 L10 3 L11.5 4.5 L5 10.5 Z" fill="#2f6fb3"/></svg>
<span style="left:503.5px;top:62.5px;font-size:8.31px;line-height:12px;color:#1c1c1c;">Formatação Condicional</span>
<svg style="left:595.0px;top:66.5px;" width="6" height="5" viewBox="0 0 6 5"><path d="M1 1 L3.0 2.80 L5 1" fill="none" stroke="#3c3c3c" stroke-width="1.05"/></svg>
<span style="left:503.5px;top:80.5px;font-size:8.26px;line-height:12px;color:#1c1c1c;">Formatar como Tabela</span>
<svg style="left:587.5px;top:84.5px;" width="6" height="5" viewBox="0 0 6 5"><path d="M1 1 L3.0 2.80 L5 1" fill="none" stroke="#3c3c3c" stroke-width="1.05"/></svg>
<span style="left:503.5px;top:98.5px;font-size:8.05px;line-height:12px;color:#1c1c1c;transform:scaleX(0.984);">Estilos de Célula</span>
<svg style="left:564.0px;top:102.5px;" width="6" height="5" viewBox="0 0 6 5"><path d="M1 1 L3.0 2.80 L5 1" fill="none" stroke="#3c3c3c" stroke-width="1.05"/></svg>
<svg style="left:621.5px;top:63px;" width="12" height="11" viewBox="0 0 12 11"><rect x="2.5" y="0.5" width="9" height="10" fill="#f2f2f2" stroke="#626262" stroke-width="1"/><path d="M2.5 3.8 H11.5 M2.5 7.2 H11.5 M7 0.5 V10.5" stroke="#626262" stroke-width="0.8"/><rect x="4" y="3.8" width="6" height="3.4" fill="#9cc3ee"/><path d="M4.5 5.5 H0.6 M2.2 3.9 L0.6 5.5 L2.2 7.1" fill="none" stroke="#2f6fb3" stroke-width="1.1"/></svg>
<svg style="left:621.5px;top:81px;" width="12" height="11" viewBox="0 0 12 11"><rect x="0.5" y="0.5" width="11" height="10" fill="#f2f2f2" stroke="#626262" stroke-width="1"/><path d="M0.5 3.8 H11.5 M0.5 7.2 H11.5 M4.2 0.5 V10.5" stroke="#626262" stroke-width="0.8"/><rect x="2" y="3.8" width="4" height="3.4" fill="#9cc3ee"/><path d="M7 3.2 L11 7.8 M11 3.2 L7 7.8" stroke="#d13438" stroke-width="1.2"/></svg>
<svg style="left:621.5px;top:98.5px;" width="12" height="12" viewBox="0 0 12 12"><rect x="1.5" y="2.5" width="9" height="8" fill="#c9ddf4" stroke="#626262" stroke-width="1"/><path d="M0 2.5 H12 M0 10.5 H12 M4 0.5 V12 M8 0.5 V12" stroke="#626262" stroke-width="0.8"/></svg>
<span style="left:636px;top:62.5px;font-size:8.05px;line-height:12px;color:#1c1c1c;transform:scaleX(0.961);">Inserir</span>
<svg style="left:669.0px;top:66.0px;" width="6" height="5" viewBox="0 0 6 5"><path d="M1 1 L3.0 2.80 L5 1" fill="none" stroke="#3c3c3c" stroke-width="1.05"/></svg>
<span style="left:636px;top:80.5px;font-size:8.05px;line-height:12px;color:#1c1c1c;transform:scaleX(0.993);">Excluir</span>
<svg style="left:671.0px;top:84.0px;" width="6" height="5" viewBox="0 0 6 5"><path d="M1 1 L3.0 2.80 L5 1" fill="none" stroke="#3c3c3c" stroke-width="1.05"/></svg>
<span style="left:636px;top:98.5px;font-size:8.14px;line-height:12px;color:#1c1c1c;">Formatar</span>
<svg style="left:671.0px;top:102.0px;" width="6" height="5" viewBox="0 0 6 5"><path d="M1 1 L3.0 2.80 L5 1" fill="none" stroke="#3c3c3c" stroke-width="1.05"/></svg>
<svg style="left:697.5px;top:62px;" width="10" height="11" viewBox="0 0 10 11"><path d="M9 2 V0.7 H1 L5.2 5.4 L1 10.3 H9 V9" fill="none" stroke="#666" stroke-width="1"/></svg>
<svg style="left:715.5px;top:66.0px;" width="6" height="5" viewBox="0 0 6 5"><path d="M1 1 L3.0 2.80 L5 1" fill="none" stroke="#3c3c3c" stroke-width="1.05"/></svg>
<svg style="left:731px;top:61.5px;" width="13" height="12" viewBox="0 0 13 12"><text x="0" y="5.5" font-size="6.5" font-weight="700" fill="#2f6fb3" font-family="Liberation Sans">A</text><text x="0" y="11.8" font-size="6.5" font-weight="700" fill="#585858" font-family="Liberation Sans">Z</text><path d="M6 4.5 H12 L9.8 7.2 V10.5 H8.2 V7.2 Z" fill="none" stroke="#585858" stroke-width="0.9"/></svg>
<svg style="left:745.5px;top:66.0px;" width="6" height="5" viewBox="0 0 6 5"><path d="M1 1 L3.0 2.80 L5 1" fill="none" stroke="#3c3c3c" stroke-width="1.05"/></svg>
<svg style="left:697px;top:80.5px;" width="11" height="10" viewBox="0 0 11 10"><rect x="0.5" y="0.5" width="10" height="9" fill="#e6eef8" stroke="#626262" stroke-width="1"/><path d="M0.5 2.2 H10.5" stroke="#626262" stroke-width="1.4"/><path d="M5.5 3.5 V7.6 M3.6 5.8 L5.5 7.7 L7.4 5.8" fill="none" stroke="#2f6fb3" stroke-width="1.1"/></svg>
<svg style="left:711.0px;top:83.5px;" width="6" height="5" viewBox="0 0 6 5"><path d="M1 1 L3.0 2.80 L5 1" fill="none" stroke="#3c3c3c" stroke-width="1.05"/></svg>
<svg style="left:731.5px;top:79.5px;" width="12" height="12" viewBox="0 0 12 12"><circle cx="7.5" cy="4.5" r="3.6" fill="#e8e8e8" stroke="#626262" stroke-width="1"/><path d="M5 7.2 L0.8 11.2" stroke="#626262" stroke-width="1.3"/></svg>
<svg style="left:745.5px;top:83.5px;" width="6" height="5" viewBox="0 0 6 5"><path d="M1 1 L3.0 2.80 L5 1" fill="none" stroke="#3c3c3c" stroke-width="1.05"/></svg>
<svg style="left:697px;top:98px;" width="11" height="11" viewBox="0 0 11 11"><path d="M1 6.5 L6.5 1 L10.2 4.7 L4.7 10.2 Z" fill="#d83b84" stroke="#b02a6b" stroke-width="0.6"/><path d="M5 2.6 L8.6 6.2 L10.2 4.7 L6.5 1 Z" fill="#f3f3f3" stroke="#b02a6b" stroke-width="0.6"/></svg>
<svg style="left:711.0px;top:101.0px;" width="6" height="5" viewBox="0 0 6 5"><path d="M1 1 L3.0 2.80 L5 1" fill="none" stroke="#3c3c3c" stroke-width="1.05"/></svg>
<svg style="left:784px;top:62px;" width="20" height="20" viewBox="0 0 20 20"><rect x="0.5" y="0.5" width="19" height="19" fill="#e3bcae" stroke="#d8704e" stroke-width="0.9"/><rect x="2.6" y="2.6" width="6.4" height="6.4" fill="#cbcbcb" stroke="#cf5a36" stroke-width="0.8"/><rect x="11" y="2.6" width="6.4" height="6.4" fill="#cbcbcb" stroke="#cf5a36" stroke-width="0.8"/><rect x="2.6" y="11" width="6.4" height="6.4" fill="#cbcbcb" stroke="#cf5a36" stroke-width="0.8"/><rect x="11" y="11" width="6.4" height="6.4" fill="#cbcbcb" stroke="#cf5a36" stroke-width="0.8"/></svg>
<span style="left:769.5px;top:86.0px;font-size:8.14px;line-height:12px;color:#1c1c1c;">Suplementos</span>
<svg style="left:835.5px;top:62px;" width="22" height="20" viewBox="0 0 22 20"><defs><linearGradient id="cg1" x1="0" y1="0" x2="1" y2="1"><stop offset="0" stop-color="#2bb3ea"/><stop offset="0.6" stop-color="#2a62dc"/><stop offset="1" stop-color="#6a4be0"/></linearGradient>
<linearGradient id="cg2" x1="0.3" y1="0" x2="0.4" y2="1"><stop offset="0" stop-color="#35c37a"/><stop offset="0.5" stop-color="#e9cf34"/><stop offset="1" stop-color="#f2803a"/></linearGradient>
<linearGradient id="cg3" x1="0.5" y1="0" x2="0.4" y2="1"><stop offset="0" stop-color="#9a5cf0"/><stop offset="0.55" stop-color="#e85aa8"/><stop offset="1" stop-color="#f4975a"/></linearGradient></defs>
<path d="M6.8 4.5 Q4.8 4.5 4.1 6.3 L1.3 13 Q0.4 16 3.4 16.4 H7 Q8.8 16.4 9.5 14.6 L12 7 Q11 4.5 6.8 4.5 Z" fill="url(#cg2)"/>
<path d="M6.2 4.8 Q6.8 1.2 9.5 1.2 H13 Q15 1.2 15.6 3.2 L16.6 6.6 H12.2 Q11.4 6.6 11 7.6 L10 10.5 Q10.5 5 6.2 4.8 Z" fill="url(#cg1)"/>
<path d="M15.2 15.5 Q17.2 15.5 17.9 13.7 L20.7 7 Q21.6 4 18.6 3.6 H15 Q13.2 3.6 12.5 5.4 L10 13 Q11 15.5 15.2 15.5 Z" fill="url(#cg3)"/>
<path d="M15.8 15.2 Q15.2 18.8 12.5 18.8 H9 Q7 18.8 6.4 16.8 L5.4 13.4 H9.8 Q10.6 13.4 11 12.4 L12 9.5 Q11.5 15 15.8 15.2 Z" fill="#f38a4c"/></svg>
<span style="left:832.5px;top:85.5px;font-size:8.55px;line-height:12px;color:#1c1c1c;transform:scaleX(1.015);">Copilot</span>
<svg style="left:890px;top:63.5px;" width="19" height="20" viewBox="0 0 19 20"><path d="M3 1 H9.5 L13 4.5 V10 M8 16.5 H3 Q1.5 16.5 1.5 15 V2.5 Q1.5 1 3 1" fill="none" stroke="#3f5fc0" stroke-width="1.1"/><path d="M3.5 10.5 Q6 9 7 4.5 Q7.4 3 6.6 3 Q5.8 3.2 6.3 5.5 Q7.2 8.5 10.5 9.8" fill="none" stroke="#3f5fc0" stroke-width="0.8"/>
<rect x="8" y="12.2" width="6" height="3.6" rx="1.8" transform="rotate(-40 11 14)" fill="none" stroke="#3f5fc0" stroke-width="1.1"/><rect x="11.5" y="9.2" width="6" height="3.6" rx="1.8" transform="rotate(-40 14.5 11)" fill="none" stroke="#3f5fc0" stroke-width="1.1"/></svg>
<span style="left:891px;top:85.5px;font-size:8.05px;line-height:12px;color:#1c1c1c;transform:scaleX(0.948);">Crie</span>
<span style="left:883px;top:96.5px;font-size:8.05px;line-height:12px;color:#1c1c1c;transform:scaleX(0.965);">um PDF</span>
<svg style="left:13px;top:12.5px;" width="11.5" height="10.5" viewBox="0 0 11.5 10.5"><rect x="0" y="0" width="11.5" height="10.5" rx="1" fill="#1d6f42"/><rect x="2" y="0" width="9.5" height="3.4" fill="#6fd08c"/><rect x="6.5" y="3.4" width="5" height="3.4" fill="#2f9a5a"/>
<text x="1.2" y="9.3" font-size="5.5" font-weight="700" fill="#fff" font-family="Liberation Sans">x</text></svg>
<div style="left:124.5px;top:11px;width:29.5px;height:14px;background:#5a5a5a;border:1px solid #a0a0a0;border-radius:7px;box-sizing:border-box;"></div>
<div style="left:127px;top:14px;width:9px;height:9px;background:#fff;border-radius:50%;"></div>
<svg style="left:162px;top:13px;" width="12" height="12" viewBox="0 0 12 12"><path d="M0.6 0.6 H9 L11.4 3 V11.4 H0.6 Z" fill="none" stroke="#f0f0f0" stroke-width="1.1"/><path d="M3 0.6 V4 H8.5 V0.6 M2.8 11.4 V7 H9.2 V11.4" fill="none" stroke="#f0f0f0" stroke-width="1"/></svg>
<svg style="left:183px;top:12.5px;" width="11" height="12" viewBox="0 0 11 12"><path d="M1 1 V5.5 H5.5" fill="none" stroke="#f0f0f0" stroke-width="1.2"/><path d="M1.2 5.3 Q4.5 0.8 8.2 2.6 Q11.3 4.8 8.8 8 L5.2 11.5" fill="none" stroke="#f0f0f0" stroke-width="1.2"/></svg>
<svg style="left:196.5px;top:16.0px;" width="6" height="5" viewBox="0 0 6 5"><path d="M1 1 L3.0 2.80 L5 1" fill="none" stroke="#e0e0e0" stroke-width="1.05"/></svg>
<svg style="left:209.5px;top:12.5px;" width="11" height="12" viewBox="0 0 11 12"><path d="M10 1 V5.5 H5.5" fill="none" stroke="#858585" stroke-width="1.2"/><path d="M9.8 5.3 Q6.5 0.8 2.8 2.6 Q-0.3 4.8 2.2 8 L5.8 11.5" fill="none" stroke="#858585" stroke-width="1.2"/></svg>
<svg style="left:224.0px;top:16.0px;" width="6" height="5" viewBox="0 0 6 5"><path d="M1 1 L3.0 2.80 L5 1" fill="none" stroke="#7c7c7c" stroke-width="1.05"/></svg>
<svg style="left:239px;top:16px;" width="7" height="6" viewBox="0 0 7 6"><path d="M0.5 0.6 H6.5" stroke="#c8c8c8" stroke-width="1.1"/><path d="M0.8 2.6 H6.2 L3.5 5.4 Z" fill="#c8c8c8"/></svg>
<svg style="left:442.75px;top:16.8px;" width="8.5" height="5" viewBox="0 0 8.5 5"><path d="M1 1 L4.25 3.93 L7.5 1" fill="none" stroke="#d8d8d8" stroke-width="0.9"/></svg>
<svg style="left:476px;top:13px;" width="11" height="11" viewBox="0 0 11 11"><circle cx="6.5" cy="4.3" r="3.5" fill="none" stroke="#3a3a3a" stroke-width="1"/><path d="M4 6.8 L0.7 10.2" stroke="#3a3a3a" stroke-width="1.1"/></svg>
<div style="left:827.5px;top:10.5px;width:16.5px;height:16.5px;background:#0f5ea8;border-radius:50%;"></div>
<span style="left:831px;top:13.5px;font-size:7.27px;line-height:11px;color:#fff;font-weight:700;transform:scaleX(0.903);">AD</span>
<div style="left:866px;top:18.2px;width:7.5px;height:1.2px;background:#f2f2f2;"></div>
<svg style="left:898.5px;top:15px;" width="9" height="8" viewBox="0 0 9 8"><rect x="0.6" y="2" width="5.8" height="5.4" rx="1" fill="none" stroke="#f2f2f2" stroke-width="1.1"/><path d="M2.2 2 V1.6 Q2.2 0.6 3.2 0.6 H7.2 Q8.3 0.6 8.3 1.6 V5 Q8.3 6 7.3 6 H6.6" fill="none" stroke="#f2f2f2" stroke-width="1.1"/></svg>
<svg style="left:932px;top:14.5px;" width="9" height="9" viewBox="0 0 9 9"><path d="M0.7 0.7 L8.3 8.3 M8.3 0.7 L0.7 8.3" stroke="#f2f2f2" stroke-width="1.2"/></svg>
<div style="left:767px;top:38px;width:70px;height:16.5px;background:#c8c8c8;border-radius:3px;"></div>
<svg style="left:770.5px;top:42px;" width="8" height="8" viewBox="0 0 8 8"><path d="M0.6 0.6 H7.4 V5.2 H3.2 L1.6 7 V5.2 H0.6 Z" fill="none" stroke="#2a2a2a" stroke-width="0.9"/></svg>
<span style="left:781.5px;top:39.8px;font-size:8.91px;line-height:13px;color:#262626;">Comentários</span>
<div style="left:843.5px;top:38px;width:101.5px;height:16.5px;background:#5cbd7c;border-radius:3px;"></div>
<svg style="left:846.5px;top:42px;" width="8" height="8" viewBox="0 0 8 8"><path d="M0.6 4 V7.4 H7.4 V4" fill="none" stroke="#0f4a25" stroke-width="0.9"/><circle cx="3" cy="2.4" r="1.4" fill="none" stroke="#0f4a25" stroke-width="0.8"/><path d="M0.8 6 Q3 2.8 5.4 5.6 M5 2 L7.3 3.8" fill="none" stroke="#0f4a25" stroke-width="0.8"/></svg>
<span style="left:858px;top:39.8px;font-size:9.12px;line-height:13px;color:#0f4a25;">Compartilhamento</span>
<svg style="left:936.3px;top:44.3px;" width="6" height="5" viewBox="0 0 6 5"><path d="M1 1 L3.0 2.80 L5 1" fill="none" stroke="#0f4a25" stroke-width="1.05"/></svg>
<span style="left:13px;top:134.5px;font-size:9.21px;line-height:13px;color:#f2f2f2;transform:scaleX(0.887);">H25</span>
<svg style="left:66.85px;top:139.3px;" width="7.5" height="5" viewBox="0 0 7.5 5"><path d="M1 1 L3.75 3.48 L6.5 1" fill="none" stroke="#f0f0f0" stroke-width="1.1"/></svg>
<div style="left:85px;top:137.3px;width:1.3px;height:1.3px;background:#c8c8c8;"></div>
<div style="left:85px;top:140px;width:1.3px;height:1.3px;background:#c8c8c8;"></div>
<div style="left:85px;top:142.7px;width:1.3px;height:1.3px;background:#c8c8c8;"></div>
<svg style="left:97.5px;top:136.5px;" width="8" height="8" viewBox="0 0 8 8"><path d="M0.7 0.7 L7.3 7.3 M7.3 0.7 L0.7 7.3" stroke="#858585" stroke-width="1"/></svg>
<svg style="left:113.5px;top:136.5px;" width="10" height="8" viewBox="0 0 10 8"><path d="M0.7 4.2 L3.6 7.2 L9.3 0.8" fill="none" stroke="#858585" stroke-width="1"/></svg>
<span style="left:131.5px;top:133.0px;font-size:10.67px;line-height:15px;color:#f2f2f2;font-weight:700;font-style:italic;transform:scaleX(0.955);font-family:'Liberation Serif',serif;">fx</span>
<svg style="left:143.8px;top:139.0px;" width="7" height="5" viewBox="0 0 7 5"><path d="M1 1 L3.5 3.25 L6 1" fill="none" stroke="#d8d8d8" stroke-width="1"/></svg>
<div style="left:139.5px;top:476px;width:1px;height:13px;background:#9a9a9a;"></div>
<div style="left:573.6px;top:480px;width:1.3px;height:1.3px;background:#cfcfcf;"></div>
<div style="left:573.6px;top:482.7px;width:1.3px;height:1.3px;background:#cfcfcf;"></div>
<div style="left:573.6px;top:485.4px;width:1.3px;height:1.3px;background:#cfcfcf;"></div>
<svg style="left:48.5px;top:496.5px;" width="10" height="10" viewBox="0 0 10 10"><rect x="0.6" y="0.6" width="8.8" height="8.8" rx="1" fill="none" stroke="#e8e8e8" stroke-width="0.9"/><path d="M0.6 3 H9.4" stroke="#e8e8e8" stroke-width="0.9"/><circle cx="5" cy="6" r="1.7" fill="none" stroke="#e8e8e8" stroke-width="0.9"/></svg>
<svg style="left:70px;top:496px;" width="10" height="11" viewBox="0 0 10 11"><circle cx="4.5" cy="1.6" r="1.2" fill="none" stroke="#e8e8e8" stroke-width="0.8"/><path d="M0.8 3.6 L4.5 4.4 L8.2 3.6 M4.5 4.4 V6.5 L2.5 10 M4.5 6.5 L6 8.5" fill="none" stroke="#e8e8e8" stroke-width="0.9"/><path d="M6.2 8 L9.5 10.5 M9.5 8 L6.2 10.5" stroke="#e8e8e8" stroke-width="0.9"/></svg>
<div style="left:746.5px;top:494.3px;width:25px;height:14.5px;background:#6a6a6a;"></div>
<svg style="left:753.5px;top:497px;" width="10" height="9" viewBox="0 0 10 9"><rect x="0.5" y="0.5" width="9" height="8" fill="none" stroke="#f2f2f2" stroke-width="1"/><path d="M0.5 3.2 H9.5 M0.5 5.8 H9.5 M3.5 0.5 V8.5 M6.5 0.5 V8.5" stroke="#f2f2f2" stroke-width="0.8"/></svg>
<svg style="left:781.5px;top:497px;" width="10" height="9" viewBox="0 0 10 9"><rect x="0.5" y="0.5" width="9" height="8" fill="none" stroke="#f2f2f2" stroke-width="1"/><rect x="2.8" y="2.6" width="4.4" height="3.8" fill="none" stroke="#f2f2f2" stroke-width="0.9"/></svg>
<svg style="left:809px;top:497px;" width="10" height="9" viewBox="0 0 10 9"><rect x="0.5" y="0.5" width="9" height="8" fill="none" stroke="#f2f2f2" stroke-width="1"/><path d="M5.8 0.5 V4.2 H0.5" fill="none" stroke="#f2f2f2" stroke-width="0.9"/></svg>
<div style="left:832.5px;top:501px;width:4.5px;height:1px;background:#e0e0e0;"></div>
<div style="left:840.5px;top:501px;width:70px;height:1px;background:#c4c4c4;"></div>
<div style="left:874.5px;top:497px;width:3px;height:9px;background:#d8d8d8;"></div>
<div style="left:914.5px;top:501px;width:5px;height:1px;background:#e8e8e8;"></div>
<div style="left:916.5px;top:499px;width:1px;height:5px;background:#e8e8e8;"></div>
<svg style="left:13px;top:518px;" width="11.5" height="11.5" viewBox="0 0 11.5 11.5"><path d="M0 1.6 L4.8 0.9 V5.4 H0 Z M5.6 0.8 L11.5 0 V5.4 H5.6 Z M0 6.2 H4.8 V10.7 L0 10 Z M5.6 6.2 H11.5 V11.5 L5.6 10.8 Z" fill="#fff"/></svg>
<svg style="left:43.5px;top:517.5px;" width="11.5" height="11.5" viewBox="0 0 11.5 11.5"><circle cx="7" cy="4.4" r="3.7" fill="none" stroke="#333" stroke-width="1.1"/><path d="M4.3 7.2 L0.7 10.8" stroke="#333" stroke-width="1.2"/></svg>
<svg style="left:186px;top:512px;" width="46" height="22" viewBox="0 0 46 22"><path d="M17 2 Q18.8 8.7 25.5 10.5 Q18.8 12.3 17 19 Q15.2 12.3 8.5 10.5 Q15.2 8.7 17 2 Z" fill="#f7c52b"/>
<path d="M32.5 8 Q33 11.5 36.5 12.3 Q33 13 32.5 16.5 Q32 13 28.5 12.3 Q32 11.5 32.5 8 Z" fill="#f7c52b"/>
<path d="M3 13.5 Q3.4 16 5.8 16.5 Q3.4 17 3 19.5 Q2.6 17 0.2 16.5 Q2.6 16 3 13.5 Z" fill="#2a9fe0"/>
<circle cx="28.5" cy="4" r="1.2" fill="#f0703a"/><circle cx="41" cy="17.8" r="1.1" fill="#6fc060"/></svg>
<svg style="left:246px;top:517.5px;" width="12.5" height="10.5" viewBox="0 0 12.5 10.5"><rect x="2.2" y="2" width="6.6" height="6" fill="none" stroke="#fff" stroke-width="1.1"/><path d="M0 0.6 H9.5 M0 9.6 H9.5 M11.2 0.2 V10.2" stroke="#fff" stroke-width="1.1"/><path d="M11.2 3.5 V6.5" stroke="#2c413b" stroke-width="1.4"/></svg>
<svg style="left:278px;top:516px;" width="15" height="15" viewBox="0 0 15 15"><g transform="translate(7.5 7.5)"><g fill="#fff"><rect x="-1.5" y="-7" width="3" height="4" transform="rotate(0)"/><rect x="-1.5" y="-7" width="3" height="4" transform="rotate(45)"/><rect x="-1.5" y="-7" width="3" height="4" transform="rotate(90)"/><rect x="-1.5" y="-7" width="3" height="4" transform="rotate(135)"/><rect x="-1.5" y="-7" width="3" height="4" transform="rotate(180)"/><rect x="-1.5" y="-7" width="3" height="4" transform="rotate(225)"/><rect x="-1.5" y="-7" width="3" height="4" transform="rotate(270)"/><rect x="-1.5" y="-7" width="3" height="4" transform="rotate(315)"/></g><circle r="4.9" fill="#fff"/><circle r="2.4" fill="#2c413b"/></g></svg>
<svg style="left:305.5px;top:515px;" width="17" height="16" viewBox="0 0 17 16"><path d="M5.2 4.5 V2.5 Q5.2 0.8 7 0.8 H10 Q11.8 0.8 11.8 2.5 V4.5" fill="none" stroke="#4aa3e0" stroke-width="1.2"/><rect x="0.5" y="4" width="16" height="11.5" rx="1.8" fill="#f4f4f4"/>
<rect x="5" y="6.5" width="3" height="3" fill="#f25022"/><rect x="8.8" y="6.5" width="3" height="3" fill="#7fba00"/><rect x="5" y="10.3" width="3" height="3" fill="#00a4ef"/><rect x="8.8" y="10.3" width="3" height="3" fill="#ffb900"/></svg>
<svg style="left:335px;top:516.5px;" width="16" height="13" viewBox="0 0 16 13"><path d="M0.5 1.5 Q0.5 0.5 1.5 0.5 H6 L7.5 2.2 H14.5 Q15.5 2.2 15.5 3.2 V12 H0.5 Z" fill="#e9a825"/><rect x="0.5" y="3.6" width="15" height="8.9" rx="0.8" fill="#f8d35e"/><rect x="4.5" y="8.3" width="7" height="4.2" fill="#4a9be0"/><rect x="6.3" y="9.5" width="3.4" height="1.2" fill="#f8d35e"/></svg>
<svg style="left:362.5px;top:515px;" width="17" height="17" viewBox="0 0 17 17"><defs><linearGradient id="eg" x1="0" y1="0" x2="1" y2="1"><stop offset="0" stop-color="#35c1f1"/><stop offset="0.55" stop-color="#1b7fd4"/><stop offset="1" stop-color="#0c59a4"/></linearGradient></defs>
<circle cx="8.8" cy="8" r="7.8" fill="url(#eg)"/><path d="M1.2 7 Q2.5 1 9 0.3 Q15.5 0.8 16.5 6.5 Q16.5 9.5 13 9.8 Q10.5 9.6 10.8 7.6 Q10 4.6 6.5 5 Q2.5 5.5 1.2 9 Z" fill="#5bd66b" opacity="0.9"/><ellipse cx="9.5" cy="9" rx="3.2" ry="2.6" fill="#1565b8"/>
<rect x="0.3" y="10.2" width="8" height="6" rx="0.8" fill="#c8761a"/><rect x="2.8" y="9" width="3" height="2" fill="none" stroke="#c8761a" stroke-width="0.9"/><rect x="0.3" y="12.4" width="8" height="1" fill="#8a4b0c"/></svg>
<svg style="left:391.5px;top:515.5px;" width="16.5" height="16.5" viewBox="0 0 16.5 16.5"><circle cx="8.2" cy="8.2" r="8" fill="#f2c31b"/><path d="M8.2 8.2 L1.3 4.2 A8 8 0 0 1 15.1 4.2 Z" fill="#e33b2e"/><path d="M8.2 0.2 A8 8 0 0 1 15.1 4.2 L8.2 4.2 Z" fill="#e33b2e"/>
<path d="M8.2 8.2 L1.3 4.2 A8 8 0 0 0 8.2 16.2 L11.7 10.2 Z" fill="#2e9e4c"/><path d="M15.1 4.2 A8 8 0 0 1 8.2 16.2 L11.8 10 Q12.8 7 11 4.2 Z" fill="#f2c31b"/><circle cx="8.2" cy="8.2" r="3.8" fill="#f4f4f4"/><circle cx="8.2" cy="8.2" r="3" fill="#3f86e8"/></svg>
<svg style="left:419.5px;top:515px;" width="17" height="17" viewBox="0 0 17 17"><defs><radialGradient id="fg" cx="0.6" cy="0.3" r="0.9"><stop offset="0" stop-color="#ffd43a"/><stop offset="0.45" stop-color="#ff8a1c"/><stop offset="1" stop-color="#e0245c"/></radialGradient></defs>
<path d="M8.5 1.5 Q9.5 0.2 10.8 0 Q10.6 1.8 12.5 3 Q16.8 5.2 16.3 9.8 Q15.5 16 8.5 16.6 Q1.5 16 0.7 9.8 Q0.5 6 2.5 3.6 Q2.6 5 3.6 5.4 Q4.2 2.6 8.5 1.5 Z" fill="url(#fg)"/><circle cx="8.7" cy="9.8" r="3.9" fill="#7a3fe0"/><path d="M5 8.2 Q7 6 9.8 7 Q8 7.6 8 9 Q9 10.8 11.5 9.8 Q10.5 13.2 7.5 12.8 Q4.5 12 5 8.2 Z" fill="#ff9a2e"/></svg>
<svg style="left:449px;top:514.5px;" width="15" height="16.5" viewBox="0 0 15 16.5"><rect x="0.5" y="1.5" width="12.5" height="14.5" fill="#f1f1ee" stroke="#b9b9b0" stroke-width="0.8"/><rect x="2" y="5.5" width="9.5" height="8.5" fill="#7ab648"/><path d="M3 12 L4.5 8.5 L6 11.5 L7.5 7.5 L9 11 L10.5 9" fill="none" stroke="#2d5a1a" stroke-width="1"/><path d="M7.5 8 L13.5 0.8 L14.6 1.8 L9 8.8 Z" fill="#e8c23a" stroke="#8a7a2a" stroke-width="0.5"/></svg>
<svg style="left:478px;top:515px;" width="15" height="14.5" viewBox="0 0 15 14.5"><rect x="0.7" y="0.7" width="13.6" height="13.1" fill="#0c2b0c" stroke="#8fe23a" stroke-width="1.2"/><text x="7.5" y="10.6" font-size="8" font-weight="700" fill="#8fe23a" text-anchor="middle" font-family="Liberation Sans">Dw</text></svg>
<svg style="left:505px;top:515px;" width="17" height="15.5" viewBox="0 0 17 15.5"><defs><linearGradient id="gl" x1="0" y1="0" x2="1" y2="1"><stop offset="0" stop-color="#cfeaf7"/><stop offset="1" stop-color="#5fa6cf"/></linearGradient></defs><path d="M5.5 1 L15.5 0.5 L13.5 14.5 L1 13.5 Z" fill="url(#gl)"/><path d="M1 13.5 L13.5 14.5 L14 15.3 L1.5 14.3 Z" fill="#e8f4fa"/></svg>
<svg style="left:534.5px;top:516px;" width="15.5" height="13" viewBox="0 0 15.5 13"><rect x="0" y="0" width="15.5" height="13" fill="#0a0a0a"/><rect x="0" y="0" width="15.5" height="2" fill="#3a3a3a"/><path d="M1.5 4.5 H7 M1.5 6.5 H5" stroke="#d8d8d8" stroke-width="0.8"/></svg>
<svg style="left:562px;top:515px;" width="16.5" height="16" viewBox="0 0 16.5 16"><rect x="0" y="0" width="16.5" height="16" rx="2" fill="#f37a2b"/><path d="M4 3.5 H7 L8.2 5 L9.5 3.5 H12.5 V6.5 L11.2 8 L12.5 9.5 V12.5 H9.5 L8.2 11 L7 12.5 H4 V9.5 L5.3 8 L4 6.5 Z" fill="none" stroke="#fff" stroke-width="1.5"/></svg>
<svg style="left:591px;top:515px;" width="15" height="14.5" viewBox="0 0 15 14.5"><rect x="0" y="0" width="15" height="14.5" rx="1.5" fill="#b1130d"/><path d="M3 11.5 Q6.2 9.6 7.4 4.2 Q7.7 2.6 6.9 2.6 Q6.1 2.8 6.6 5 Q7.8 9 12.3 9.3 Q13 8.3 11.5 8.2 Q7.5 8.2 3 11.5 Z" fill="none" stroke="#fff" stroke-width="1"/></svg>
<svg style="left:619px;top:515px;" width="15" height="14.5" viewBox="0 0 15 14.5"><rect x="0.7" y="0.7" width="13.6" height="13.1" fill="#35330a" stroke="#e6de2a" stroke-width="1.2"/><text x="7.5" y="10.6" font-size="8" font-weight="700" fill="#e6de2a" text-anchor="middle" font-family="Liberation Sans">Fw</text></svg>
<div style="left:640.5px;top:508.8px;width:24.5px;height:27.5px;background:#52655e;"></div>
<div style="left:640.5px;top:535px;width:24.5px;height:1px;background:#9fc8dd;"></div>
<svg style="left:646px;top:515px;" width="14.5" height="14" viewBox="0 0 14.5 14"><rect x="2.5" y="0" width="12" height="13" rx="1" fill="#21a366"/><rect x="8.5" y="0" width="6" height="4.3" fill="#6fd08c"/><rect x="2.5" y="0" width="6" height="4.3" fill="#33c481"/><rect x="8.5" y="4.3" width="6" height="4.3" fill="#21a366"/><rect x="2.5" y="4.3" width="6" height="4.3" fill="#107c41"/><rect x="2.5" y="8.6" width="12" height="4.4" fill="#185c37"/>
<rect x="0" y="5" width="7.5" height="8" rx="1" fill="#107c41"/><text x="3.7" y="11.6" font-size="6" font-weight="700" fill="#fff" text-anchor="middle" font-family="Liberation Sans">x</text></svg>
<svg style="left:673px;top:515px;" width="19" height="16" viewBox="0 0 19 16"><ellipse cx="9" cy="6.5" rx="8.8" ry="5.8" fill="#e8e4ea" transform="rotate(-18 9 6.5)"/><ellipse cx="9" cy="6.5" rx="6.8" ry="3.6" fill="#d4283c" transform="rotate(-18 9 6.5)"/><ellipse cx="9" cy="6.2" rx="4" ry="1.6" fill="#f2eef2" transform="rotate(-18 9 6.2)"/><path d="M11 9 L13 15 M9.5 12.5 H16" stroke="#2a7fd0" stroke-width="1.6"/></svg>
<svg style="left:713px;top:516px;" width="19" height="15.5" viewBox="0 0 19 15.5"><circle cx="12.5" cy="5" r="4.4" fill="#f5a623"/><path d="M4.5 15 Q0.5 15 0.5 11.5 Q0.8 8.5 4 8.5 Q5 5 8.8 5.2 Q12 5.6 12.6 8.8 Q16.8 8.6 17 12 Q16.8 15 13.5 15 Z" fill="#c9dcf2"/><path d="M4.5 15 Q0.5 15 0.5 11.5 Q4 13.5 9 12.5 Q14 11.5 17 12 Q16.8 15 13.5 15 Z" fill="#9dbfe8"/></svg>
<svg style="left:773.5px;top:519.5px;" width="10" height="6.5" viewBox="0 0 10 6.5"><path d="M0.8 5.7 L5 1.2 L9.2 5.7" fill="none" stroke="#fff" stroke-width="1.2"/></svg>
<svg style="left:790px;top:517px;" width="11" height="11" viewBox="0 0 11 11"><g fill="none" stroke="#e8e8e8" stroke-width="1"><path d="M1.5 10 A8.5 8.5 0 0 1 10 1.5"/><path d="M4 10 A6 6 0 0 1 10 4"/><path d="M6.5 10 A3.5 3.5 0 0 1 10 6.5"/></g><circle cx="9.3" cy="9.3" r="1" fill="#e8e8e8"/><path d="M1 10.3 H10.3 V1" fill="none" stroke="#8a9a94" stroke-width="0.5"/></svg>
<svg style="left:806px;top:517.5px;" width="11" height="10" viewBox="0 0 11 10"><path d="M0.5 3.5 H2.5 L5 1 V9 L2.5 6.5 H0.5 Z" fill="none" stroke="#fff" stroke-width="0.9"/><path d="M6.5 3.3 Q7.8 5 6.5 6.7 M8 2 Q10 5 8 8 " fill="none" stroke="#fff" stroke-width="0.9"/></svg>
<svg style="left:823px;top:518.5px;" width="16.5" height="9" viewBox="0 0 16.5 9"><rect x="0.5" y="0.5" width="15.5" height="8" fill="none" stroke="#fff" stroke-width="1"/><path d="M2.5 3 H14 M2.5 5 H14" stroke="#fff" stroke-width="0.9" stroke-dasharray="1.2 1"/><path d="M4.5 6.8 H12" stroke="#fff" stroke-width="0.9"/></svg>
<svg style="left:924px;top:516.5px;" width="16" height="16" viewBox="0 0 16 16"><path d="M0.5 0.5 H12 V8.5 H5 L2.5 11 V8.5 H0.5 Z" fill="#fff"/><path d="M2.5 2.8 H10 M2.5 4.6 H10 M2.5 6.4 H10" stroke="#2c413b" stroke-width="0.7"/><circle cx="10.5" cy="11" r="4.5" fill="#2c413b" stroke="#fff" stroke-width="0.9"/><text x="10.5" y="13.6" font-size="7" font-weight="700" fill="#fff" text-anchor="middle" font-family="Liberation Sans">2</text></svg>
<div style="left:330px;top:535px;width:24px;height:1px;background:#5c7a84;"></div>
<div style="left:359px;top:535px;width:24px;height:1px;background:#8fb5c8;"></div>
<div style="left:417px;top:535px;width:24px;height:1px;background:#8fb5c8;"></div>
<div style="left:446px;top:535px;width:24px;height:1px;background:#5c7a84;"></div>
<div style="left:474px;top:535px;width:24px;height:1px;background:#5c7a84;"></div>
<div style="left:502px;top:535px;width:24px;height:1px;background:#5c7a84;"></div>
<div style="left:531px;top:535px;width:24px;height:1px;background:#5c7a84;"></div>
<div style="left:559px;top:535px;width:24px;height:1px;background:#5c7a84;"></div>
<div style="left:587px;top:535px;width:24px;height:1px;background:#5c7a84;"></div>
<div style="left:615px;top:535px;width:24px;height:1px;background:#5c7a84;"></div>
<div style="left:670px;top:535px;width:24px;height:1px;background:#8fb5c8;"></div>
<svg style="left:394.5px;top:332.1px;" width="4" height="4" viewBox="0 0 4 4"><path d="M0 0 H3.5 L0 3.5 Z" fill="#0e5c2a"/></svg>
<svg style="left:936.75px;top:138.0px;" width="8.5" height="5" viewBox="0 0 8.5 5"><path d="M1 1 L4.25 3.93 L7.5 1" fill="none" stroke="#e0e0e0" stroke-width="1.0"/></svg>
</div></body></html>
